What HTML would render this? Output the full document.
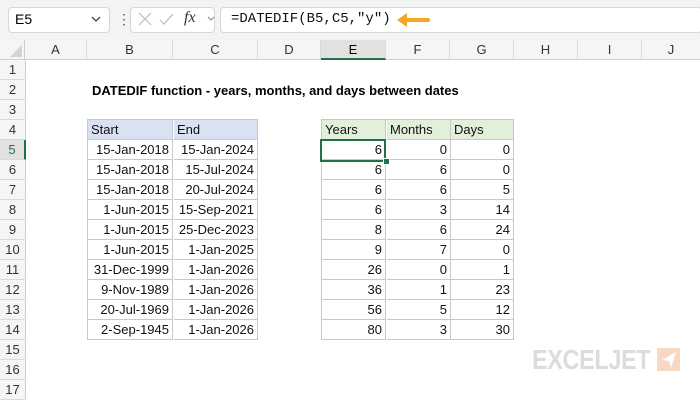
<!DOCTYPE html><html><head><style>
body{margin:0;width:700px;height:400px;overflow:hidden;background:#fff;font-family:"Liberation Sans",sans-serif;position:relative}
.a{position:absolute}
.top{left:0;top:0;width:700px;height:40px;background:#f3f3f3}
.box{background:#fff;border:1px solid #d6d6d6;border-radius:4px}
.ch{top:40px;height:19px;background:#f5f5f5;border-right:1px solid #dadada;border-bottom:1px solid #cfcfcf;font-size:13px;color:#333;text-align:center;line-height:19px}
.rh{left:0;width:25px;height:19px;background:#f5f5f5;border-bottom:1px solid #dadada;border-right:1px solid #cfcfcf;font-size:13px;color:#333;text-align:center;line-height:20px}
.c{height:19px;border-right:1px solid #c8c8c8;border-bottom:1px solid #c8c8c8;font-size:13px;line-height:20px;padding:0 3px;box-sizing:content-box;white-space:nowrap;color:#111}
.r{text-align:right}
</style></head><body>
<div class="a top"></div>
<div class="a box" style="left:8px;top:7px;width:100px;height:24px"></div>
<div class="a" style="left:15px;top:11px;font-size:14px">E5</div>
<svg class="a" style="left:91px;top:16px" width="10" height="7"><path d="M1 1l4 4 4-4" stroke="#444" fill="none" stroke-width="1.3"/></svg>
<div class="a" style="left:117px;top:11px;font-size:14px;color:#555">⋮</div>
<div class="a box" style="left:130px;top:7px;width:83px;height:24px"></div>
<svg class="a" style="left:138px;top:12px" width="80" height="16"><path d="M1 1l12 12M13 1L1 13" stroke="#bbb" stroke-width="1.2"/><path d="M22 8l4 4 9-10" stroke="#bbb" stroke-width="1.2" fill="none"/><path d="M70 5l3 3 3-3" stroke="#888" fill="none"/></svg>
<div class="a" style="left:184px;top:9px;font-size:16px;font-style:italic;font-family:'Liberation Serif',serif;color:#333">fx</div>
<div class="a box" style="left:220px;top:7px;width:480px;height:24px"></div>
<div class="a" style="left:231px;top:11px;font-size:14px;font-family:'Liberation Mono',monospace;color:#111">=DATEDIF(B5,C5,"y")</div>
<svg class="a" style="left:395px;top:12px" width="40" height="16"><path d="M10 8h23" stroke="#f5a623" stroke-width="4" stroke-linecap="round"/><path d="M2 8l10-7v14z" fill="#f5a623"/></svg>
<div class="a" style="left:0;top:40px;width:25px;height:20px;background:#f5f5f5;border-right:1px solid #cfcfcf;border-bottom:1px solid #cfcfcf;box-sizing:border-box"></div>
<svg class="a" style="left:10px;top:45px" width="12" height="12"><path d="M12 0v12H0z" fill="#d4d4d4"/></svg>
<div class="a ch" style="left:25px;width:61px">A</div>
<div class="a ch" style="left:87px;width:85px">B</div>
<div class="a ch" style="left:173px;width:84px">C</div>
<div class="a ch" style="left:258px;width:62px">D</div>
<div class="a ch" style="left:321px;width:64px;background:#e1e1e1;border-bottom:2px solid #217346;height:18px;color:#000">E</div>
<div class="a ch" style="left:386px;width:63px">F</div>
<div class="a ch" style="left:450px;width:63px">G</div>
<div class="a ch" style="left:514px;width:63px">H</div>
<div class="a ch" style="left:578px;width:63px">I</div>
<div class="a ch" style="left:642px;width:58px">J</div>
<div id="rows"></div>
<div class="a" style="left:92px;top:83px;font-size:13px;font-weight:bold">DATEDIF function - years, months, and days between dates</div>
<script>
var O=60;
var h='';for(var i=1;i<=17;i++){var t=O+20*(i-1);var sel=i==5;h+='<div class="a rh" style="top:'+t+'px;'+(sel?'background:#e1e1e1;color:#217346;border-right:2px solid #217346;width:24px':'')+'">'+i+'</div>';}
var B=['15-Jan-2018','15-Jan-2018','15-Jan-2018','1-Jun-2015','1-Jun-2015','1-Jun-2015','31-Dec-1999','9-Nov-1989','20-Jul-1969','2-Sep-1945'];
var C=['15-Jan-2024','15-Jul-2024','20-Jul-2024','15-Sep-2021','25-Dec-2023','1-Jan-2025','1-Jan-2026','1-Jan-2026','1-Jan-2026','1-Jan-2026'];
var E=[6,6,6,6,8,9,26,36,56,80],F=[0,6,6,3,6,7,0,1,5,3],G=[0,0,5,14,24,0,1,23,12,30];
function cell(l,w,t,txt,cls,bg){return '<div class="a c '+cls+'" style="left:'+l+'px;top:'+t+'px;width:'+(w-7)+'px;'+(bg?'background:'+bg+';':'')+'">'+txt+'</div>';}
var T=O+60;
h+='<div class="a" style="left:87px;top:'+(T-1)+'px;width:171px;height:1px;background:#c8c8c8"></div><div class="a" style="left:87px;top:'+(T-1)+'px;width:1px;height:221px;background:#c8c8c8"></div>';
h+='<div class="a" style="left:321px;top:'+(T-1)+'px;width:193px;height:1px;background:#c8c8c8"></div><div class="a" style="left:321px;top:'+(T-1)+'px;width:1px;height:221px;background:#c8c8c8"></div>';
h+=cell(88,85,T,'Start','','#d9e1f2')+cell(174,84,T,'End','','#d9e1f2');
h+=cell(322,64,T,'Years','','#e2efda')+cell(387,64,T,'Months','','#e2efda')+cell(451,63,T,'Days','','#e2efda');
for(var k=0;k<10;k++){var t=T+20+20*k;h+=cell(88,85,t,B[k],'r')+cell(174,84,t,C[k],'r')+cell(322,64,t,E[k],'r')+cell(387,64,t,F[k],'r')+cell(451,63,t,G[k],'r');}
h+='<div class="a" style="left:320px;top:'+(T+19)+'px;width:62px;height:19px;border:2px solid #217346"></div><div class="a" style="left:383px;top:'+(T+38)+'px;width:5px;height:5px;background:#217346;border:1px solid #fff"></div>';
document.getElementById('rows').innerHTML=h;
</script>
<div class="a" style="left:532px;top:344px;font-size:28px;font-weight:bold;color:#dcdcdc;transform:scaleX(0.84);transform-origin:0 0;letter-spacing:-0.5px">EXCELJET</div>
<svg class="a" style="left:657px;top:348px" width="23" height="23"><rect width="23" height="23" fill="#f8d8c4"/><path d="M19 4L5 12l7 1 2 7z" fill="#fff"/></svg>
</body></html>
